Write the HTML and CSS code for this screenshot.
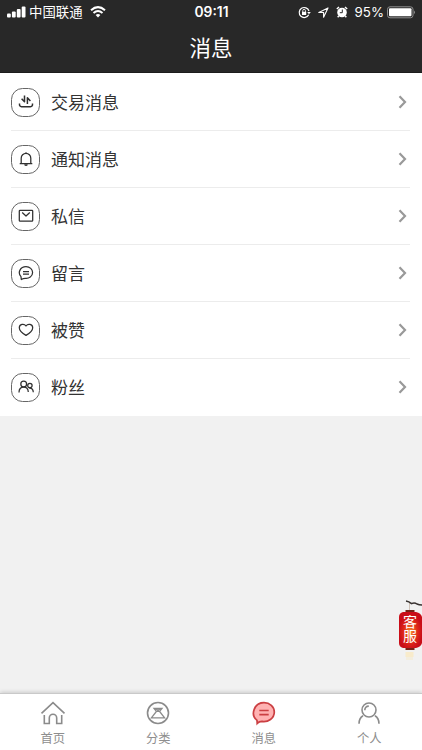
FILE: index.html
```html
<!DOCTYPE html>
<html lang="zh-CN">
<head>
<meta charset="utf-8">
<title>消息</title>
<link rel="stylesheet" href="styles.css">
</head>
<body>
<div class="app">
  <header class="header">
    <div class="status">
      <div class="status-left">
        <svg class="signal" width="19" height="12" viewBox="0 0 19 12" fill="#fff"><rect x="0" y="7.5" width="3.8" height="4" rx="1"/><rect x="4.900" y="5.500" width="3.8" height="6" rx="1"/><rect x="9.800" y="3" width="3.8" height="8.500" rx="1"/><rect x="14.700" y="0.500" width="3.8" height="11" rx="1"/></svg>
        <span class="carrier">中国联通</span>
        <svg class="wifi" width="16" height="12" viewBox="0 0 16 12" fill="none" stroke="#fff" stroke-width="2"><path d="M1 4.300Q8-2 15 4.300M3.500 7Q8 3.100 12.500 7"/><path d="M5.600 8.900Q8 7 10.400 8.900L8 11.500Z" fill="#fff" stroke="none"/></svg>
      </div>
      <span class="time">09:11</span>
      <div class="status-right">
        <svg width="13" height="13" viewBox="0 0 13 13" fill="none" stroke="#fff" stroke-width="1.200"><path d="M10.700 8.800A5 5 0 1 1 11 5"/><path d="M9.200 6h3.600L11 8.200Z" fill="#fff" stroke="none"/><rect x="4" y="5.800" width="4.200" height="3.200" fill="#fff" stroke="none"/><path d="M4.800 6V4.600a1.300 1.300 0 0 1 2.600 0V6" stroke-width=".9"/></svg>
        <svg class="locate" width="11" height="11" viewBox="0 0 11 11" fill="none" stroke="#fff" stroke-width="1.100" stroke-linejoin="round"><path d="M.8 5.500L10 .9 5.600 10.200V5.500Z"/></svg>
        <svg class="alarm" width="12" height="12" viewBox="0 0 12 12"><circle cx="6" cy="6.500" r="4.800" fill="#fff"/><path d="M.8 3L3 1M9 1l2.200 2M2.700 10l-1 1.300M9.300 10l1 1.300" stroke="#fff" stroke-width="1.400"/><path d="M6.300 3.500v3.200H3.800" fill="none" stroke="#282828"/></svg>
        <span class="percent">95%</span>
        <svg width="29" height="13" viewBox="0 0 29 13"><rect x=".5" y=".8" width="25.500" height="11" rx="2.500" fill="none" stroke="#8d8d8d"/><rect x="2" y="2.300" width="22.500" height="8" rx="1" fill="#fff"/><path d="M27 4.500q2 1.800 0 3.600Z" fill="#8d8d8d"/></svg>
      </div>
    </div>
    <h1 class="title">消息</h1>
  </header>

  <main class="list">
    <a class="row">
      <span class="badge"><svg class="glyph trade" viewBox="0 0 16 16"><path d="M3.600 4.800L6.500 7.800V1.500M9.400 10V3.800l3 3.200M1.500 9.500c-.2 2.200.5 3.200 2 3.200h9c1.500 0 2.200-1 2-3.200"/></svg></span>
      <span class="label">交易消息</span><svg class="chevron" viewBox="0 0 9 14"><path d="M1.500 1.300L7 7l-5.500 5.700"/></svg>
    </a>
    <a class="row">
      <span class="badge"><svg class="glyph" viewBox="0 0 16 16"><path d="M1.700 12.700h12.600M3.200 12.500V7.200a4.800 4.800 0 0 1 9.600 0v5.300M8 2.400V1.300M6.600 13.500q1.400 1.700 2.800 0"/></svg></span>
      <span class="label">通知消息</span><svg class="chevron" viewBox="0 0 9 14"><path d="M1.500 1.300L7 7l-5.500 5.700"/></svg>
    </a>
    <a class="row">
      <span class="badge"><svg class="glyph" viewBox="0 0 16 16"><rect x="1.300" y="2.300" width="13.400" height="10.900" rx=".7"/><path d="M4.200 4.500L8 8l3.800-3.500"/></svg></span>
      <span class="label">私信</span><svg class="chevron" viewBox="0 0 9 14"><path d="M1.500 1.300L7 7l-5.500 5.700"/></svg>
    </a>
    <a class="row">
      <span class="badge"><svg class="glyph" viewBox="0 0 16 16"><path d="M3 11.700C-.8 7.500 2.400 1.700 8 1.700c3.800 0 6.600 2.500 6.600 5.900 0 3.900-3.700 6.200-7.300 5.800-1.500 0-2.500.2-4 1.100ZM5 6.500h6M5 9h6"/></svg></span>
      <span class="label">留言</span><svg class="chevron" viewBox="0 0 9 14"><path d="M1.500 1.300L7 7l-5.500 5.700"/></svg>
    </a>
    <a class="row">
      <span class="badge"><svg class="glyph" viewBox="0 0 16 16"><path d="M8 13.400C5.500 11.900 1.300 9 1.300 5.700 1.300 1.900 6.200 1.200 8 4c1.800-2.800 6.700-2.100 6.700 1.700C14.700 9 10.500 11.900 8 13.400Z"/></svg></span>
      <span class="label">被赞</span><svg class="chevron" viewBox="0 0 9 14"><path d="M1.500 1.300L7 7l-5.500 5.700"/></svg>
    </a>
    <a class="row">
      <span class="badge"><svg class="glyph" viewBox="0 0 16 16"><circle cx="5.700" cy="5" r="2.900"/><path d="M1 13.500c0-3.400 2-5.300 4.700-5.300s4.400 1.900 4.600 4.800"/><circle cx="11.900" cy="6.500" r="2.200"/><path d="M11.200 9.200c2.500-.4 4 1.300 4.100 4"/></svg></span>
      <span class="label">粉丝</span><svg class="chevron" viewBox="0 0 9 14"><path d="M1.500 1.300L7 7l-5.500 5.700"/></svg>
    </a>
  </main>

  <nav class="tabs">
    <a class="tab"><svg class="tab-icon" viewBox="0 0 26 26"><path d="M1.500 13.300L13 2.700l11.500 10.600M4.300 15v8.500h5V18a3.700 3.700 0 0 1 7.400 0v5.500h5V15"/></svg><span>首页</span></a>
    <a class="tab"><svg class="tab-icon" viewBox="0 0 26 26"><circle cx="13" cy="13" r="10.500"/><path d="M9 8.400h8l-2.400 3 5 6.500H6.400l5-6.500ZM10.500 8.500l4 2.900M15.500 8.500l-4 2.900M11.400 11.400h3.200" stroke-width="1.300"/></svg><span>分类</span></a>
    <a class="tab"><svg class="tab-icon active" viewBox="0 0 26 26"><path d="M6 20.300C-1.200 14.500 3.400 2.700 13 2.700c5.700 0 10.300 3.900 10.300 9.300 0 6.500-6.200 10.300-12.300 9.400-2 0-3.500.6-4.800 2ZM8.300 10.500h9.400M8.300 14.700h9.400"/></svg><span>消息</span></a>
    <a class="tab"><svg class="tab-icon" viewBox="0 0 26 26"><circle cx="13" cy="10" r="7"/><path d="M8.800 10.300c0-2.400 1.500-4.200 4-4.200M3 23.700c0-3.500 1.400-6.400 4-8M19 15.700c2.600 1.600 4 4.500 4 8"/></svg><span>个人</span></a>
  </nav>

  <div class="lantern">
    <svg class="lantern-art" viewBox="0 0 26 64">
      <defs><radialGradient id="glow" cy=".55"><stop offset="0" stop-color="#f98a2c"/><stop offset=".6" stop-color="#e02a1a"/><stop offset="1" stop-color="#c90d18"/></radialGradient></defs>
      <path d="M13.500 4v8" stroke="#c9b7aa" stroke-width=".8"/>
      <path d="M10 2q3 .5 5.500 2.600 3-1.500 5.500.4 2 1 5 1" fill="none" stroke="#393331" stroke-width="1.500"/>
      <rect x="9.500" y="53" width="8" height="5" fill="#f8ebcb"/><rect x="10" y="58" width="7" height="3" fill="#f3eddd"/>
      <rect x="9.500" y="11" width="9" height="3" fill="#762318"/><rect x="9.500" y="47" width="9" height="4" fill="#762318"/>
      <path d="M7 13h13q5 1 6 5v26q-1 4-6 5H7q-4-1-4-5V18q0-4 4-5Z" fill="url(#glow)"/>
    </svg>
    <span class="lantern-text">客服</span>
  </div>
</div>
</body>
</html>
```
FILE: styles.css
```css
* { box-sizing: border-box; }
body { margin: 0; font-family: "Liberation Sans", "Noto Sans CJK SC", sans-serif; }
svg { display: block; flex: none; }
.app { position: relative; width: 422px; height: 750px; display: flex; flex-direction: column; background: #f1f1f1; overflow: hidden; }
.header { height: 73px; flex: none; background: #282828; color: #fff; border-bottom: 1px solid #1d1d1d; }
.status { height: 24px; display: grid; grid-template-columns: 1fr auto 1fr; align-items: center; padding: 0 6px 0 7px; }
.status-left, .status-right { display: flex; align-items: center; }
.status-right { justify-content: flex-end; }
.carrier { margin-left: 3px; padding-top: 2px; font-size: 13.4px; line-height: 22px; }
.wifi { margin-left: 7px; }
.time { font: 600 13.8px/24px Inter, sans-serif; }
.locate { margin-left: 7px; }
.alarm { margin: 0 7px; }
.percent { font: 13.3px/24px Inter, sans-serif; margin-right: 3px; }
.title { margin: 0; padding-top: 2px; font-size: 21.5px; line-height: 46px; font-weight: 400; text-align: center; }
.list { height: 343px; flex: none; display: grid; grid-template-rows: repeat(6, 1fr); padding: 1px 12px 0 11px; background: #fff; }
.row { display: flex; align-items: center; border-bottom: 1px solid #ececec; }
.row:last-child { border-bottom-color: transparent; }
.badge { width: 29px; height: 29px; display: grid; place-items: center; border: 1px solid #666; border-radius: 11.5px; }
.glyph { width: 16px; height: 16px; fill: none; stroke: #303030; stroke-width: 1.25; stroke-linejoin: round; }
.trade { stroke-width: 1.5; }
.label { flex: 1; margin-left: 11px; padding-top: 3px; font-size: 17px; line-height: 26px; color: #333; }
.chevron { width: 9px; height: 14px; margin-right: 3px; fill: none; stroke: #999; stroke-width: 2.2; }
.tabs { height: 57px; margin-top: auto; display: grid; grid-template-columns: repeat(4, 1fr); background: #fff; border-top: 1px solid #c9c9c9; box-shadow: 0 -1px 4px rgba(0,0,0,.16); }
.tab { display: flex; flex-direction: column; align-items: center; padding-top: 6px; font-size: 12.3px; line-height: 18px; color: #8e8e8e; }
.tab-icon { width: 26px; height: 26px; margin-bottom: 4px; fill: none; stroke: #8b8b8b; stroke-width: 1.6; }
.tab-icon.active { fill: #ffb2b2; stroke: #cb3f42; stroke-width: 1.7; }
.lantern { position: absolute; left: 396px; top: 599px; width: 26px; height: 64px; }
.lantern-art { width: 26px; height: 64px; }
.lantern-text { position: absolute; left: 7px; top: 16px; width: 14px; font-size: 14px; line-height: 14px; color: #fff; }
```
